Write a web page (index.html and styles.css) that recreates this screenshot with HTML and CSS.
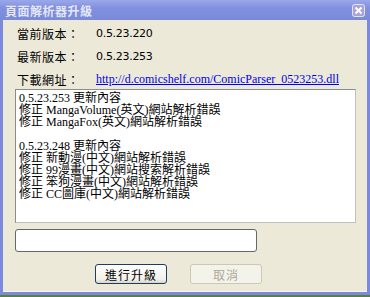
FILE: index.html
```html
<!DOCTYPE html>
<html lang="zh-Hant">
<head>
   <meta charset="utf-8">
   <title>頁面解析器升級</title>
   <link rel="stylesheet" href="styles.css">
</head>
<body>
   <div class="window">
      <div class="titlebar">
         <span class="title">頁面解析器升級</span>
         <span class="close">
            <svg width="13" height="13" viewBox="0 0 13 13">
               <rect x="0.5" y="0.5" width="12" height="12" rx="2" fill="#a9a3dc" stroke="#e6e4f6"/>
               <path d="M3.5 3.5 L9.5 9.5 M9.5 3.5 L3.5 9.5" stroke="#fff" stroke-width="2"/>
            </svg>
         </span>
      </div>
      <div class="content">
         <div class="row"><span class="label">當前版本：</span><span class="value">0.5.23.220</span></div>
         <div class="row"><span class="label">最新版本：</span><span class="value">0.5.23.253</span></div>
         <div class="row"><span class="label">下載網址：</span><a class="link" href="#">http://d.comicshelf.com/ComicParser_0523253.dll</a></div>
         <div class="log">0.5.23.253 更新內容
修正 MangaVolume(英文)網站解析錯誤
修正 MangaFox(英文)網站解析錯誤

0.5.23.248 更新內容
修正 新動漫(中文)網站解析錯誤
修正 99漫畫(中文)網站搜索解析錯誤
修正 笨狗漫畫(中文)網站解析錯誤
修正 CC圖庫(中文)網站解析錯誤</div>
         <div class="status"></div>
         <div class="buttons">
            <button class="btn">進行升級</button>
            <button class="btn" disabled>取消</button>
         </div>
      </div>
   </div>
</body>
</html>
```

FILE: styles.css
```css
body {
   margin: 0;
   width: 370px;
   height: 297px;
   background: #5b7f3e;
   overflow: hidden;
}

.window {
   width: 370px;
   height: 295px;
   box-sizing: border-box;
   background: #7b8ade;
   padding: 0 3px 3px 3px;
   display: flex;
   flex-direction: column;
}

.titlebar {
   height: 20px;
   margin: 0 -3px;
   padding: 0 5px 0 5px;
   background: linear-gradient(#9aa8ea, #8190df 40%, #7a8ad9);
   display: flex;
   align-items: center;
   justify-content: space-between;
}

.title {
   font-family: "Noto Sans CJK TC", sans-serif;
   font-weight: bold;
   font-size: 12px;
   color: #e4e7f8;
   letter-spacing: 0.5px;
}

.close {
   display: flex;
   margin-right: 0;
}

.content {
   flex: 1;
   background: #ece9d8;
   border-bottom: 1px solid #f6f4ec;
   padding: 2px 0 0 12px;
   font-family: "Liberation Sans", "Noto Sans CJK TC", sans-serif;
   font-size: 12px;
   color: #000;
}

.row {
   height: 23px;
   display: flex;
   align-items: center;
   padding-left: 2px;
}

.label {
   width: 79px;
   font-family: "Noto Sans CJK TC", sans-serif;
   letter-spacing: 0.5px;
}

.value {
   font-family: "DejaVu Sans", sans-serif;
   font-size: 11px;
   letter-spacing: -0.3px;
}

.link {
   font-family: "Liberation Serif", serif;
   font-size: 12px;
   color: #0000ee;
   text-decoration: underline;
}

.log {
   margin-top: -2px;
   width: 341px;
   height: 134px;
   box-sizing: border-box;
   border: 1px solid #7f9db9;
   border-color: #8c8c8c #c0c0c0 #c0c0c0 #8c8c8c;
   background: #fff;
   padding: 2px 3px;
   font-family: "Liberation Serif", "Noto Sans CJK TC", serif;
   font-size: 12px;
   line-height: 12px;
   white-space: pre;
   overflow: hidden;
}

.status {
   margin-top: 6px;
   width: 242px;
   height: 23px;
   box-sizing: border-box;
   border: 1px solid #5f6a6a;
   border-radius: 3px;
   background: #fff;
}

.buttons {
   margin-top: 12px;
   display: flex;
   gap: 23px;
   padding-left: 80px;
}

.btn {
   width: 72px;
   height: 20px;
   padding: 0;
   border: 1px solid #1c3f5f;
   border-radius: 3px;
   background: linear-gradient(#ffffff, #f1f0ea 80%, #d8d4c6);
   font-family: "Noto Sans CJK TC", sans-serif;
   font-size: 12px;
   color: #000;
   letter-spacing: 1px;
}

.btn:disabled {
   border-color: #cbc8b9;
   background: #f4f3ea;
   color: #aca899;
}
```
